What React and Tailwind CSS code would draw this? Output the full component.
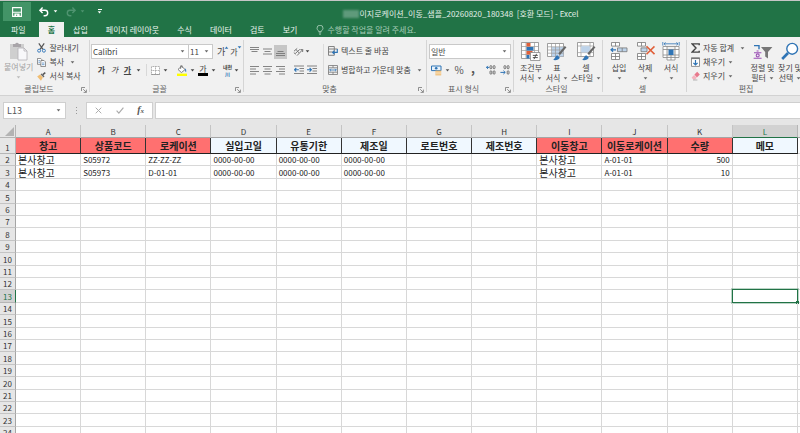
import { clsx } from "clsx";

const tabs = ["삽입", "페이지 레이아웃", "수식", "데이터", "검토", "보기"];

const columns = ["A", "B", "C", "D", "E", "F", "G", "H", "I", "J", "K", "L"];

const headers = [
  { label: "창고", required: true },
  { label: "상품코드", required: true },
  { label: "로케이션", required: true },
  { label: "실입고일" },
  { label: "유통기한" },
  { label: "제조일" },
  { label: "로트번호" },
  { label: "제조번호" },
  { label: "이동창고", required: true },
  { label: "이동로케이션", required: true },
  { label: "수량", required: true },
  { label: "메모" },
];

const data = {
  2: ["본사창고", "S05972", "ZZ-ZZ-ZZ", "0000-00-00", "0000-00-00", "0000-00-00", "", "", "본사창고", "A-01-01", "500", ""],
  3: ["본사창고", "S05973", "D-01-01", "0000-00-00", "0000-00-00", "0000-00-00", "", "", "본사창고", "A-01-01", "10", ""],
};

const rows = Array.from({ length: 24 }, (_, i) => i + 2);
const active = { row: 13, col: "L" };

function Caret({ className }) {
  return (
    <svg viewBox="0 0 5 3" className={clsx("w-[5px] h-[3px] shrink-0", className)} fill="currentColor">
      <path d="M0.7 0.3h3.6L2.5 2.4z" />
    </svg>
  );
}

function Divider() {
  return <span className="w-px h-3 bg-[#d8d8d8] shrink-0" />;
}

function Launcher() {
  return (
    <svg viewBox="0 0 6 6" className="w-[6px] h-[6px]" fill="none" stroke="#777" strokeWidth="0.8">
      <path d="M0.5 4V0.5H4M2.2 2.2L5.2 5.2M5.4 2.6v2.8H2.6" />
    </svg>
  );
}

function Group({ label, launcher, className, children }) {
  return (
    <section className={clsx("relative flex flex-col shrink-0 pt-1", className)}>
      <div className="h-[43px] flex">{children}</div>
      <div className={clsx("h-3 text-center leading-3 text-[#5e5e5e]", launcher ? "pr-4" : "pr-2")}>{label}</div>
      {launcher && (
        <button aria-label={`${label} 설정`} className="absolute right-[3px] bottom-[2px]">
          <Launcher />
        </button>
      )}
      <span className="absolute right-0 top-[3px] bottom-[3px] w-px bg-[#d5d5d5]" />
    </section>
  );
}

function SmallButton({ icon, label, caret, className }) {
  return (
    <button className={clsx("flex items-center gap-[3px] h-[14px] whitespace-nowrap", className)}>
      {icon}
      <span>{label}</span>
      {caret && <Caret className={clsx("text-[#666]", caret === "wide" && "ml-[3px]")} />}
    </button>
  );
}

function LargeButton({ icon, lines, className }) {
  return (
    <button className={clsx("flex flex-col items-center shrink-0 leading-[10px] whitespace-nowrap", className)}>
      {icon}
      <span className="mt-[2px]">{lines[0]}</span>
      <span className="flex items-center gap-[3px] h-[10px]">
        {lines[1]}
        <Caret className="text-[#666]" />
      </span>
    </button>
  );
}

function IconButton({ label, className, children }) {
  return (
    <button aria-label={label} className={clsx("flex items-center justify-center shrink-0 h-[14px]", className)}>
      {children}
    </button>
  );
}

/* ---------- icons ---------- */

const SaveIcon = () => (
  <svg viewBox="0 0 10 10" className="w-[10px] h-[10px]">
    <path d="M0.6 0.6h8.8v8.8H0.6z" fill="none" stroke="#fff" strokeWidth="1.1" />
    <path d="M1 4.7h8v1H1zM2.4 6.6h5.2V9.4H5.2V7.8H4v1.6H2.4z" fill="#fff" />
  </svg>
);

const UndoIcon = ({ flip }) => (
  <svg viewBox="0 0 10 10" className={clsx("w-[10px] h-[10px]", flip && "-scale-x-100")} fill="none" stroke="currentColor" strokeWidth="1.4">
    <path d="M3.6 0.6L0.9 3.3 3.6 6M1 3.3h5a2.7 2.7 0 0 1 0 5.4H4.6" />
  </svg>
);

const BulbIcon = () => (
  <svg viewBox="0 0 8 10" className="w-2 h-[10px]" fill="none" stroke="#b5d4c3" strokeWidth="0.8">
    <path d="M2.7 6.6C2.6 5.3 1 4.9 1 3.2a3 3 0 0 1 6 0c0 1.7-1.6 2.1-1.7 3.4zM2.8 7.9h2.4M3.1 9.2h1.8" />
  </svg>
);

const PasteIcon = () => (
  <svg viewBox="0 0 19 20" className="w-[19px] h-5">
    <path d="M1 3h14v15H1z" fill="#cfcfcf" />
    <path d="M4 3h2.2a1.9 1.9 0 0 1 3.6 0H12v3H4z" fill="#a9a5a9" />
    <path d="M9 7h6l3 3v9H9z" fill="#f8f8fa" stroke="#b3b0b5" strokeWidth="0.8" />
    <path d="M15 7v3h3" fill="none" stroke="#b3b0b5" strokeWidth="0.8" />
  </svg>
);

const CutIcon = () => (
  <svg viewBox="0 0 9 10" className="w-[9px] h-[10px]" fill="none">
    <path d="M1.8 0.4L6 6.4M7.2 0.4L3 6.4" stroke="#555" strokeWidth="1.2" />
    <circle cx="2.1" cy="7.7" r="1.5" stroke="#3f7fbd" />
    <circle cx="6.9" cy="7.7" r="1.5" stroke="#3f7fbd" />
  </svg>
);

const CopyIcon = () => (
  <svg viewBox="0 0 10 10" className="w-[9px] h-[9px]" fill="#fff" stroke="#666" strokeWidth="0.8">
    <path d="M0.5 0.5h3.6l1.4 1.4v5.1H0.5z" />
    <path d="M4.3 2.8h3.6l1.6 1.6v5.1H4.3z" />
    <path d="M1.6 3h1.8M1.6 4.8h1.8M5.5 5.6h2.8M5.5 7.4h2.8" stroke="#3f7fbd" />
  </svg>
);

const BrushIcon = () => (
  <svg viewBox="0 0 10 10" className="w-[9px] h-[9px]">
    <path d="M0.2 5l3.2-2.2 3.2 3.4L4.4 9.6z" fill="#f0bd72" />
    <path d="M3.9 2.6l1.4-1 3 3.2-1 1.2z" fill="#666" />
    <path d="M6.5 2.9L9.2 0.8" stroke="#555" strokeWidth="1.7" />
  </svg>
);

const BorderIcon = () => (
  <svg viewBox="0 0 9 9" className="w-[9px] h-[9px]" fill="#fff" stroke="#888" strokeWidth="0.7">
    <path d="M0.5 0.5h8v8h-8zM4.5 0.5v8M0.5 4.5h8" strokeDasharray="1 0.6" />
    <path d="M0.2 8.5h8.6" />
  </svg>
);

const FillIcon = () => (
  <svg viewBox="0 0 10 11" className="w-[10px] h-[11px]">
    <path d="M1 4.4L4.7 1.2 8 4.6 4.4 7.6z" fill="#fff" stroke="#666" strokeWidth="0.8" />
    <path d="M3.6 4V0.8h1.6V3" fill="none" stroke="#666" strokeWidth="0.7" />
    <path d="M7.6 3.2c1.4 0.4 2 1.8 1.5 4-0.9-0.4-1.2-1.6-1.1-2.6z" fill="#3f7fbd" />
    <path d="M0 8.6h10V11H0z" fill="#ff0" />
  </svg>
);

const lineShapes = {
  top: "M0 1.5h9M0 3.5h9M1.5 5.5h6",
  middle: "M0 3h9M1.5 5.5h6M0 8h9",
  bottom: "M1.5 5.5h6M0 7.5h9M0 9.5h9",
  left: "M0 1.5h9M0 4h6M0 6.5h9M0 9h6",
  center: "M0 1.5h9M1.5 4h6M0 6.5h9M1.5 9h6",
  right: "M0 1.5h9M3 4h6M0 6.5h9M3 9h6",
};

const LinesIcon = ({ shape }) => (
  <svg viewBox="0 0 9 11" className="w-[9px] h-[11px]" stroke="#777" strokeWidth="0.9">
    <path d={lineShapes[shape]} />
  </svg>
);

const OrientationIcon = () => (
  <svg viewBox="0 0 11 11" className="w-[11px] h-[11px]" fill="none" stroke="#777" strokeWidth="1">
    <path d="M1 5.2l3.2-2.8M2.2 7.6l4.6-4.2M4 9.6L9.6 3.8M7.4 3.6l2.4 0-0.2 2.4M3.2 3.6l2.6 3.2M0.8 6.6l1.8 1.6" />
  </svg>
);

const IndentIcon = ({ out }) => (
  <svg viewBox="0 0 10 10" className="w-[10px] h-[10px]" fill="none">
    <path d="M0 1h10M5.5 3.5H10M5.5 6H10M0 8.5h10" stroke="#777" strokeWidth="0.9" />
    <path d={out ? "M0.5 4.8h4.3M2.3 3L0.5 4.8l1.8 1.8" : "M0 4.8h4.3M2.6 3l1.8 1.8-1.8 1.8"} stroke="#2f74b5" strokeWidth="1.1" />
  </svg>
);

const WrapIcon = () => (
  <svg viewBox="0 0 10 10" className="w-[10px] h-[10px]" fill="none">
    <path d="M0.5 0.5h5.8v8.8H0.5zM0.5 3h9M0.5 6h5" stroke="#777" strokeWidth="0.9" />
    <path d="M9.3 3v3.4H4.6M6.4 4.6L4.6 6.4l1.8 1.8" stroke="#2f74b5" strokeWidth="1.1" />
  </svg>
);

const MergeIcon = () => (
  <svg viewBox="0 0 10 10" className="w-[10px] h-[10px]" fill="none">
    <path d="M0.5 0.5h9v9h-9zM0.5 2.8h9M0.5 7.2h9M5 0.5v2.3M5 7.2v2.3" stroke="#777" strokeWidth="0.8" />
    <path d="M1.6 5h6.8M2.9 3.8L1.7 5l1.2 1.2M7.1 3.8L8.3 5 7.1 6.2" stroke="#2f74b5" strokeWidth="0.8" />
  </svg>
);

const CurrencyIcon = () => (
  <svg viewBox="0 0 11 11" className="w-[11px] h-[11px]">
    <path d="M0.5 1h9.5v4.6H0.5z" fill="#e9f2fa" stroke="#2f74b5" strokeWidth="1" />
    <circle cx="5.2" cy="3.3" r="1.3" fill="#2f74b5" />
    <path d="M4.4 5.6h5.8v4.8H4.4z" fill="#f0bd72" />
    <path d="M4.4 7.2h5.8M4.4 8.8h5.8" stroke="#fff" strokeWidth="0.5" />
  </svg>
);

const DecimalIcon = ({ less }) => (
  <svg viewBox="0 0 10 10" className="w-[10px] h-[10px]" fill="none" stroke="#555" strokeWidth="0.8">
    <rect x="4" y="0.6" width="1.8" height="3.2" rx="0.9" />
    <rect x="7.2" y="0.6" width="1.8" height="3.2" rx="0.9" />
    <rect x="7.2" y="5.8" width="1.8" height="3.4" rx="0.9" />
    {!less && <rect x="4" y="5.8" width="1.8" height="3.4" rx="0.9" />}
    <path d={less ? "M0.4 7.4h4.8M3.4 5.7l1.8 1.7-1.8 1.7" : "M0.4 2.4h2.9M1.9 0.9L0.4 2.4l1.5 1.5"} stroke="#2f74b5" strokeWidth="1" />
  </svg>
);

const BrushOverlay = () => (
  <>
    <path d="M18.6 4.6L12.2 12.2" stroke="#666" strokeWidth="2.2" />
    <path d="M5.6 17.8c2.4-0.2 2-3.4 4.6-4.6l2.6 2.2c-0.8 2.6-4.2 3.2-7.2 2.4z" fill="#2f74b5" />
  </>
);

const ConditionalIcon = () => (
  <svg viewBox="0 0 20 19" className="w-5 h-[19px]">
    <path d="M0.5 0.5h17v16H0.5z" fill="#fff" stroke="#888" strokeWidth="0.8" />
    <path d="M0.5 4.5h17M0.5 8.5h17M0.5 12.5h17M5 0.5v16M13.5 0.5v16" stroke="#999" strokeWidth="0.7" />
    <path d="M5.5 1h4v3.4h-4zM5.5 9h6v3.4h-6z" fill="#e0603a" />
    <path d="M5.5 5h7v3.4h-7zM5.5 13h3v3.4h-3z" fill="#2f74b5" />
    <path d="M9.5 10.5h9.5v8H9.5z" fill="#fff" stroke="#888" strokeWidth="0.8" />
    <path d="M11.8 13.4h5M11.8 15.6h5M15.6 11.8l-2.6 5.4" stroke="#444" strokeWidth="0.9" />
  </svg>
);

const TableStyleIcon = () => (
  <svg viewBox="0 0 20 19" className="w-5 h-[19px]">
    <path d="M0.5 1.5h16v13H0.5z" fill="#fff" stroke="#888" strokeWidth="0.8" />
    <path d="M4.8 5h11.6v9.4H4.8z" fill="#bdd3ea" />
    <path d="M0.5 4.8h16M0.5 8h16M0.5 11.2h16M4.5 1.5v13M8.5 1.5v13M12.5 1.5v13" stroke="#999" strokeWidth="0.7" />
    <BrushOverlay />
  </svg>
);

const CellStyleIcon = () => (
  <svg viewBox="0 0 20 19" className="w-5 h-[19px]">
    <path d="M1.5 0.5h16v14H1.5z" fill="#fff" stroke="#888" strokeWidth="0.8" />
    <path d="M1.5 4h16M1.5 10.6h16M5 0.5v14M14 0.5v14" stroke="#999" strokeWidth="0.7" />
    <path d="M5.2 4.2h8.6v6.2H5.2z" fill="#bdd3ea" />
    <BrushOverlay />
  </svg>
);

const InsertIcon = () => (
  <svg viewBox="0 0 18 19" className="w-[18px] h-[19px]" fill="#fff" stroke="#777" strokeWidth="0.8">
    <path d="M1.5 0.5h8v3.6h-8zM5.5 0.5v3.6M1.5 11.5h8v6h-8zM1.5 14.5h8M5.5 11.5v6" />
    <path d="M7.5 5.9h9.5v3.8H7.5zM12.2 5.9v3.8" fill="#bdd3ea" />
    <path d="M1 7.8h5M3 5.9L1 7.8l2 1.9" fill="none" stroke="#2f74b5" strokeWidth="1.2" />
  </svg>
);

const DeleteIcon = () => (
  <svg viewBox="0 0 19 19" className="w-[19px] h-[19px]" fill="#fff" stroke="#777" strokeWidth="0.8">
    <path d="M1.5 0.5h8v3.6h-8zM5.5 0.5v3.6M1.5 11.5h8v6h-8zM1.5 14.5h8M5.5 11.5v6" />
    <path d="M5 5.9h6v3.8H5z" fill="#bdd3ea" />
    <path d="M10.5 4.2l8 8M18.5 4.4l-8 7.8" fill="none" stroke="#e0603a" strokeWidth="1.6" />
  </svg>
);

const FormatIcon = () => (
  <svg viewBox="0 0 18 19" className="w-[18px] h-[19px]" fill="#fff" stroke="#888" strokeWidth="0.8">
    <path d="M1 4.5h16v11H1zM1 7.5h16M1 13h16M5 4.5v13.5h8V4.5M9 13v5" />
    <path d="M6.5 7.5h5v5.5h-5z" fill="#2f74b5" stroke="none" />
    <path d="M2 1.8h14M3.6 0.4L2 1.8l1.6 1.4M14.4 0.4L16 1.8l-1.6 1.4M0.8 0v3.6M17.2 0v3.6" fill="none" stroke="#2f74b5" strokeWidth="0.8" />
  </svg>
);

const SumIcon = () => (
  <svg viewBox="0 0 9 10" className="w-[9px] h-[10px]" fill="none" stroke="#444" strokeWidth="1.4">
    <path d="M8.2 2.2V0.9H1.2L5 5 1.2 9.1h7V7.8" />
  </svg>
);

const FillDownIcon = () => (
  <svg viewBox="0 0 9 10" className="w-[9px] h-[10px]" fill="none">
    <path d="M0.5 0.8h8v8.6h-8z" fill="#fff" stroke="#777" strokeWidth="0.8" />
    <path d="M0.2 1.4h8.6" stroke="#777" strokeWidth="1.4" />
    <path d="M4.5 3v5M2.4 5.8l2.1 2.2 2.1-2.2" stroke="#2f74b5" strokeWidth="1.2" />
  </svg>
);

const EraserIcon = () => (
  <svg viewBox="0 0 9 10" className="w-[9px] h-[10px]">
    <path d="M3.4 3.6L6.2 0.8l2.6 2.8-2.9 3z" fill="#e8788c" />
    <path d="M3.1 3.9L0.6 6.4l1.6 2h2l1.5-1.6z" fill="#f4b4bf" />
    <path d="M2 9h4.4" stroke="#999" strokeWidth="0.7" />
  </svg>
);

const SortIcon = () => (
  <svg viewBox="0 0 20 19" className="w-5 h-[19px]" fill="none">
    <path d="M1 3.6h5v3.6" stroke="#2f74b5" strokeWidth="1.4" />
    <path d="M3.6 9h2M1 10.8h7.4M0.6 16.2h8" stroke="#9b4fb5" strokeWidth="1.1" />
    <circle cx="4.7" cy="13.4" r="1.5" stroke="#9b4fb5" strokeWidth="1.1" />
    <path d="M8 5h11.4l-4.4 5v6.4l-2.8-1.8V10z" fill="#777" />
  </svg>
);

const FindIcon = () => (
  <svg viewBox="0 0 18 19" className="w-[18px] h-[19px]" fill="none" stroke="#2f74b5">
    <circle cx="11.2" cy="6.8" r="5.4" fill="#fff" strokeWidth="1.4" />
    <path d="M7 11L1.2 17" strokeWidth="2.6" />
  </svg>
);

/* ---------- ribbon ---------- */

function TitleBar() {
  return (
    <header className="flex items-center h-[21px] pl-[3px] text-white">
      <button aria-label="저장" className="w-7 h-[19px] flex items-center justify-center bg-[#439467]">
        <SaveIcon />
      </button>
      <button aria-label="실행 취소" className="flex items-center gap-1 ml-2">
        <UndoIcon />
        <Caret />
      </button>
      <button aria-label="다시 실행" className="flex items-center gap-1 ml-2 text-[#4f9470]">
        <UndoIcon flip />
        <Caret />
      </button>
      <button aria-label="빠른 실행 도구 모음 사용자 지정" className="flex flex-col items-center gap-px ml-3">
        <span className="w-1 h-px bg-white" />
        <Caret />
      </button>
      <h1 className="flex-1 flex items-center justify-center pl-5 pt-1 whitespace-pre text-[#e4efe9]">
        <span className="w-4 h-2 bg-[#5f9a7b] blur-[1px]" />
        {"이지로케이션_이동_샘플_20260820_180348  [호환 모드] - Excel"}
      </h1>
    </header>
  );
}

function TabBar() {
  return (
    <nav className="flex h-[15px] text-[#eaf3ee] whitespace-nowrap">
      <button className="pl-[11px] pr-[13px]">파일</button>
      <button className="px-[9px] bg-[#f1f1f1] text-[#217346] font-bold">홈</button>
      {tabs.map((tab) => (
        <button key={tab} className="px-[9px]">
          {tab}
        </button>
      ))}
      <label className="flex items-center gap-[3px] pl-[10px]">
        <BulbIcon />
        <input
          aria-label="수행할 작업"
          placeholder="수행할 작업을 알려 주세요."
          className="w-28 bg-transparent outline-none placeholder:text-[#a6cbb6]"
        />
      </label>
    </nav>
  );
}

function Combo({ label, value, className }) {
  return (
    <label className={clsx("relative block h-[15px] bg-white border border-[#c9c9c9]", className)}>
      <select aria-label={label} className="block w-full h-full pl-px appearance-none outline-none">
        <option>{value}</option>
      </select>
      <Caret className="absolute right-[3px] top-[5px] text-[#666] pointer-events-none" />
    </label>
  );
}

function Ribbon() {
  return (
    <div className="flex h-[59px] bg-[#f1f1f1] border-b border-[#d2d2d2] overflow-hidden">
      <Group label="클립보드" launcher className="w-[90px] pl-1">
        <button className="flex flex-col items-center text-[#a3a3a3] leading-[10px]">
          <PasteIcon />
          <span className="mt-px whitespace-nowrap">붙여넣기</span>
          <Caret className="mt-1 text-[#bbb]" />
        </button>
        <div className="ml-1">
          <SmallButton icon={<CutIcon />} label="잘라내기" />
          <SmallButton icon={<CopyIcon />} label="복사" caret="wide" />
          <SmallButton icon={<BrushIcon />} label="서식 복사" />
        </div>
      </Group>

      <Group label="글꼴" launcher className="w-[154px] pl-px">
        <div className="pt-[3px]">
          <div className="flex items-center">
            <Combo label="글꼴" value="Calibri" className="w-[98px]" />
            <Combo label="글꼴 크기" value="11" className="w-[25px] -ml-px" />
            <IconButton label="글꼴 크기 크게" className="ml-1 text-[9px]">
              가<Caret className="-mt-2 -ml-px rotate-180 text-[#2f74b5]" />
            </IconButton>
            <IconButton label="글꼴 크기 작게" className="ml-px">
              가<Caret className="-mt-2 -ml-px text-[#2f74b5]" />
            </IconButton>
          </div>
          <div className="flex items-center mt-1 pl-1 text-[#444]">
            <IconButton label="굵게" className="w-[13px] font-bold">가</IconButton>
            <IconButton label="기울임꼴" className="w-[13px] italic">가</IconButton>
            <IconButton label="밑줄" className="w-[13px] font-bold underline">가</IconButton>
            <Caret className="ml-[2px] mr-[5px]" />
            <Divider />
            <IconButton label="테두리" className="ml-1 gap-[3px]">
              <BorderIcon />
              <Caret />
            </IconButton>
            <span className="ml-[5px]"><Divider /></span>
            <IconButton label="채우기 색" className="ml-1 gap-[3px]">
              <FillIcon />
              <Caret />
            </IconButton>
            <IconButton label="글꼴 색" className="ml-[3px] gap-[3px]">
              <span className="w-[10px] leading-2 border-b-3 border-black">가</span>
              <Caret />
            </IconButton>
            <span className="ml-1"><Divider /></span>
            <IconButton label="윗주" className="ml-[3px] gap-[2px]">
              <span className="flex flex-col items-center text-[5px] leading-[7px] font-bold">
                <span>내천</span>
                <span className="text-[#2f74b5]">川</span>
              </span>
              <Caret />
            </IconButton>
          </div>
        </div>
      </Group>

      <Group label="맞춤" launcher className="w-[183px] pl-1">
        <div className="flex pt-[3px]">
          <div>
            <div className="flex items-center h-[15px]">
              <IconButton label="위쪽 맞춤" className="w-[13px]"><LinesIcon shape="top" /></IconButton>
              <IconButton label="가운데 맞춤" className="w-[13px]"><LinesIcon shape="middle" /></IconButton>
              <IconButton label="아래쪽 맞춤" className="w-[13px] bg-[#c6c6c6]"><LinesIcon shape="bottom" /></IconButton>
              <span className="mx-[3px]"><Divider /></span>
              <IconButton label="방향" className="gap-px"><OrientationIcon /><Caret /></IconButton>
            </div>
            <div className="flex items-center mt-1 h-[14px]">
              <IconButton label="왼쪽 맞춤" className="w-[13px]"><LinesIcon shape="left" /></IconButton>
              <IconButton label="가로 가운데 맞춤" className="w-[13px]"><LinesIcon shape="center" /></IconButton>
              <IconButton label="오른쪽 맞춤" className="w-[13px]"><LinesIcon shape="right" /></IconButton>
              <span className="mx-[3px]"><Divider /></span>
              <IconButton label="내어쓰기" className="w-3"><IndentIcon out /></IconButton>
              <IconButton label="들여쓰기" className="w-[14px]"><IndentIcon /></IconButton>
            </div>
          </div>
          <span className="w-px h-9 bg-[#dcdcdc] ml-1 mr-1" />
          <div>
            <SmallButton icon={<WrapIcon />} label="텍스트 줄 바꿈" />
            <SmallButton icon={<MergeIcon />} label="병합하고 가운데 맞춤" caret="wide" className="mt-[5px]" />
          </div>
        </div>
      </Group>

      <Group label="표시 형식" launcher className="w-[87px] pl-[2px]">
        <div className="pt-[3px]">
          <Combo label="표시 형식" value="일반" className="w-[82px]" />
          <div className="flex items-center mt-1 pl-[2px] text-[#555]">
            <IconButton label="회계 표시 형식" className="gap-[3px]"><CurrencyIcon /><Caret /></IconButton>
            <IconButton label="백분율" className="ml-1 w-[10px] text-[10px]">%</IconButton>
            <IconButton label="쉼표" className="ml-[5px] w-[8px] text-[12px] font-bold pb-1">,</IconButton>
            <span className="ml-[5px] mr-1"><Divider /></span>
            <IconButton label="자릿수 늘림"><DecimalIcon /></IconButton>
            <IconButton label="자릿수 줄임" className="ml-1"><DecimalIcon less /></IconButton>
          </div>
        </div>
      </Group>

      <Group label="스타일" className="w-[89px] pl-1">
        <LargeButton className="w-[26px] pt-px" icon={<ConditionalIcon />} lines={["조건부", "서식"]} />
        <LargeButton className="w-[26px] pt-px" icon={<TableStyleIcon />} lines={["표", "서식"]} />
        <LargeButton className="w-[32px] pt-px" icon={<CellStyleIcon />} lines={["셀", "스타일"]} />
      </Group>

      <Group label="셀" className="w-[84px] pl-[3px]">
        <LargeButton className="w-[26px] pt-px" icon={<InsertIcon />} lines={["삽입", ""]} />
        <LargeButton className="w-[26px] pt-px" icon={<DeleteIcon />} lines={["삭제", ""]} />
        <LargeButton className="w-[26px] pt-px" icon={<FormatIcon />} lines={["서식", ""]} />
      </Group>

      <Group label="편집" className="w-[122px] pl-1">
        <div className="w-[58px] shrink-0">
          <SmallButton icon={<SumIcon />} label="자동 합계" caret="wide" />
          <SmallButton icon={<FillDownIcon />} label="채우기" caret="near" />
          <SmallButton icon={<EraserIcon />} label="지우기" caret="near" />
        </div>
        <LargeButton className="w-[27px] pt-px" icon={<SortIcon />} lines={["정렬 및", "필터"]} />
        <LargeButton className="w-[28px] pt-px" icon={<FindIcon />} lines={["찾기 및", "선택"]} />
      </Group>
    </div>
  );
}

function FormulaBar() {
  return (
    <div className="flex items-stretch h-[29px] pt-[6px] pb-[6px] pl-[3px]">
      <label className="relative w-[63px] bg-white border border-[#cfcfcf]">
        <input aria-label="이름 상자" defaultValue="L13" className="w-full h-full pl-[3px] outline-none text-[9px] text-[#555]" />
        <Caret className="absolute right-1 top-[6px] text-[#666]" />
      </label>
      <span className="w-5 flex flex-col items-center justify-center gap-[2px]">
        <span className="w-px h-px bg-[#999]" />
        <span className="w-px h-px bg-[#999]" />
        <span className="w-px h-px bg-[#999]" />
      </span>
      <div className="w-[67px] flex items-center justify-between px-2 bg-white border border-[#cfcfcf]">
        <button aria-label="취소">
          <svg viewBox="0 0 8 8" className="w-[7px] h-[7px]" stroke="#aaa" strokeWidth="1.1">
            <path d="M0.8 0.8l6.4 6.4M7.2 0.8L0.8 7.2" />
          </svg>
        </button>
        <button aria-label="입력">
          <svg viewBox="0 0 9 8" className="w-2 h-[7px]" fill="none" stroke="#aaa" strokeWidth="1.3">
            <path d="M0.6 4.2l2.6 2.8L8.4 0.8" />
          </svg>
        </button>
        <button aria-label="함수 삽입" className="font-['Liberation_Serif',serif] italic font-bold text-[10px] leading-3 text-[#555]">
          f<span className="text-[7px]">x</span>
        </button>
      </div>
      <input aria-label="수식 입력줄" className="flex-1 min-w-0 ml-[2px] bg-white border border-r-0 border-[#cfcfcf] outline-none" />
    </div>
  );
}

/* ---------- sheet ---------- */

function Sheet() {
  return (
    <div className="flex-1 min-h-0 overflow-hidden bg-white">
      <table className="w-full table-fixed border-separate border-spacing-0 leading-[11px] text-[#333]">
        <colgroup>
          <col className="w-4" />
          {columns.map((c) => (
            <col key={c} />
          ))}
          <col className="w-[2px]" />
        </colgroup>
        <thead>
          <tr className="h-[13px] bg-[#e6e6e6]">
            <th className="border-r border-b border-[#b5b5b5] p-0">
              <svg viewBox="0 0 15 12" className="w-[15px] h-3 block">
                <path d="M14 2v9H5z" fill="#b3b3b3" />
              </svg>
            </th>
            {columns.map((c) => (
              <th
                key={c}
                scope="col"
                className={clsx(
                  "p-0 border-r border-b font-normal",
                  c === active.col
                    ? "bg-[#d2d2d2] text-[#217346] border-r-[#b5b5b5] border-b-[#217346]"
                    : "border-r-[#c4c4c4] border-b-[#a5a5a5]"
                )}
              >
                {c}
              </th>
            ))}
            <th className="p-0 border-b border-[#a5a5a5]" />
          </tr>
        </thead>
        <tbody>
          <tr className="h-4">
            <th scope="row" className="p-0 pt-1 bg-[#e6e6e6] border-r border-b border-[#b5b5b5] font-normal">
              1
            </th>
            {headers.map((h) => (
              <td
                key={h.label}
                className={clsx(
                  "p-0 border-r border-b border-r-[#333] border-b-[#222] text-center text-[10px] leading-[14px] font-bold text-[#222] whitespace-nowrap",
                  h.required ? "bg-[#ff7070]" : "bg-[#f0f8ff]"
                )}
              >
                {h.label}
              </td>
            ))}
            <td className="p-0 border-b border-[#d8d8d8]" />
          </tr>
          {rows.map((row, i) => (
            <tr key={row} className={i % 5 === 1 || i % 5 === 3 ? "h-[13px]" : "h-[12px]"}>
              <th
                scope="row"
                className={clsx(
                  "p-0 border-r border-b font-normal",
                  row === active.row
                    ? "bg-[#d2d2d2] text-[#217346] border-r-[#217346] border-b-[#b5b5b5]"
                    : "bg-[#e6e6e6] border-r-[#a5a5a5] border-b-[#c4c4c4]"
                )}
              >
                {row}
              </th>
              {columns.map((c, j) => {
                const value = data[row]?.[j];
                return (
                  <td
                    key={c}
                    className={clsx(
                      "relative p-0 px-[2px] border-r border-b border-[#d8d8d8] whitespace-nowrap text-[#222]",
                      c === "K" && "text-right",
                      (c === "A" || c === "I") && "text-[10px]"
                    )}
                  >
                    {value}
                    {row === active.row && c === active.col && (
                      <span className="absolute -inset-px border border-[#217346] outline outline-[#217346]/30">
                        <span className="absolute -right-[2px] -bottom-[2px] w-[3px] h-[3px] bg-[#217346]" />
                      </span>
                    )}
                  </td>
                );
              })}
              <td className="p-0 border-b border-[#d8d8d8]" />
            </tr>
          ))}
        </tbody>
      </table>
    </div>
  );
}

export default function App() {
  return (
    <div className="h-screen flex flex-col overflow-hidden bg-[#e6e6e6] font-['Noto_Sans_CJK_KR','Open_Sans',sans-serif] text-[8px] leading-3 text-[#444]">
      <div className="bg-[#217346] border-t border-[#c6c6c6]">
        <TitleBar />
        <TabBar />
      </div>
      <Ribbon />
      <FormulaBar />
      <Sheet />
    </div>
  );
}
